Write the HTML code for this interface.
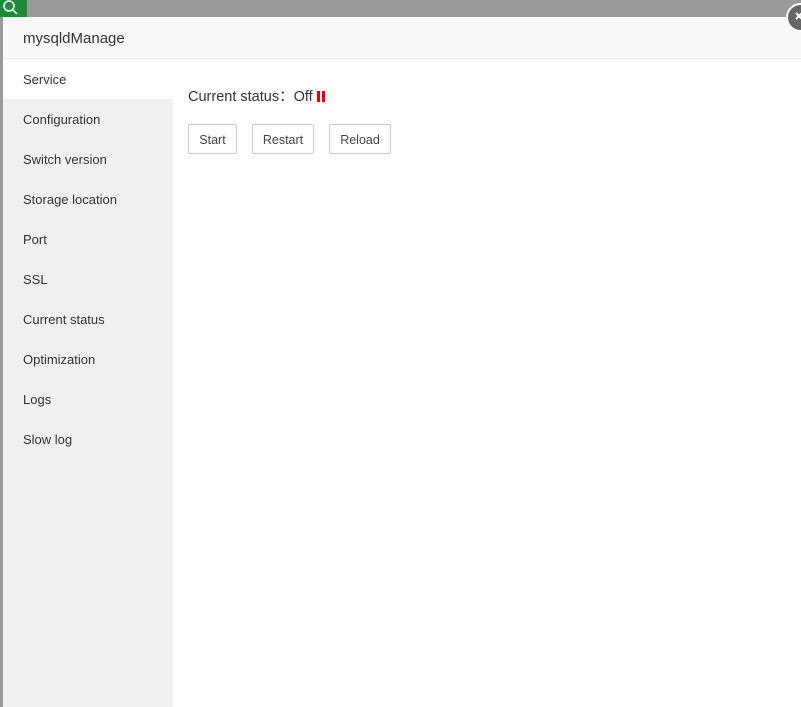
<html><head><style>
body{margin:0;width:801px;height:707px;overflow:hidden;background:#9a9a9a;font-family:"Liberation Sans",sans-serif;position:relative}
.g{position:absolute;left:0;top:0;width:27px;height:17px;background:#1f8a3a}
.dlg{position:absolute;left:3px;top:17px;width:798px;height:690px;background:#fff}
.hd{height:41px;background:#f8f8f8;border-bottom:1px solid #eee;font-size:15px;color:#333;line-height:44px;padding-left:20px}
.sb{position:absolute;left:0;top:42px;width:170px;bottom:0;background:#f0f0f0}
.sb div{height:40px;line-height:42px;padding-left:20px;font-size:13px;color:#333}
.sb .a{background:#fff}
.ct{position:absolute;left:185px;top:68px;font-size:14.5px;color:#333}
.bar{display:inline-block;width:3px;height:11px;background:#e00;margin-left:4px;vertical-align:-1px}
.btn{position:absolute;top:107px;height:28px;border:1px solid #ccc;border-radius:2px;font-size:12.5px;color:#444;line-height:30px;text-align:center;background:#fff}
.x{position:absolute;left:786px;top:3px;width:29px;height:29px;border-radius:50%;background:#666;border:2px solid #fff;box-sizing:border-box}
</style></head><body>
<div class="g"><svg width="20" height="17"><circle cx="9" cy="6" r="5" stroke="#fff" stroke-width="1.5" fill="none"/><line x1="13" y1="10" x2="17" y2="14" stroke="#fff" stroke-width="1.5"/></svg></div>
<div class="dlg">
<div class="hd">mysqldManage</div>
<div class="sb"><div class="a">Service</div><div>Configuration</div><div>Switch version</div><div>Storage location</div><div>Port</div><div>SSL</div><div>Current status</div><div>Optimization</div><div>Logs</div><div>Slow log</div></div>
<div class="ct">Current status：Off<span class="bar"></span><span class="bar" style="margin-left:2px"></span></div>
<div class="btn" style="left:185px;width:47px">Start</div>
<div class="btn" style="left:249px;width:60px">Restart</div>
<div class="btn" style="left:326px;width:60px">Reload</div>
</div>
<div class="x"><svg width="25" height="25" style="position:absolute;left:0;top:0"><path d="M8 8l6 6M14 8l-6 6" stroke="#fff" stroke-width="2"/></svg></div>
</body></html>
